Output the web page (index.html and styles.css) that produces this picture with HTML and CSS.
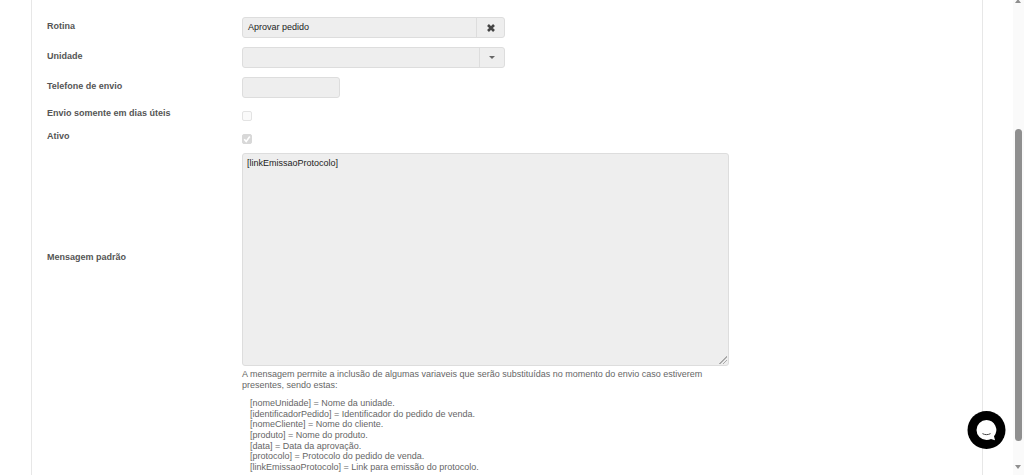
FILE: index.html
```html
<!DOCTYPE html>
<html lang="pt-BR">

<head>
    <meta charset="UTF-8">
    <meta name="viewport" content="width=device-width, initial-scale=1.0">
    <title>Mensagem automática</title>
    <link rel="stylesheet" href="styles.css">
</head>

<body>
    <div class="page">
        <main class="panel">
            <form class="form">
                <div class="form-row row-input">
                    <label class="form-label">Rotina</label>
                    <div class="combo">
                        <div class="combo-value">Aprovar pedido</div>
                        <div class="combo-btn">
                            <svg class="icon-x" viewBox="0 0 10 10" width="10" height="10">
                                <path d="M2 2 8 8M8 2 2 8" stroke="#444" stroke-width="2.6" fill="none" />
                            </svg>
                        </div>
                    </div>
                </div>

                <div class="form-row row-input">
                    <label class="form-label">Unidade</label>
                    <div class="combo">
                        <div class="combo-value"></div>
                        <div class="combo-btn combo-btn-narrow"><span class="caret"></span></div>
                    </div>
                </div>

                <div class="form-row row-input">
                    <label class="form-label" for="telefone">Telefone de envio</label>
                    <input type="text" id="telefone" class="field field-phone" disabled>
                </div>

                <div class="form-row row-check">
                    <label class="form-label">Envio somente em dias úteis</label>
                    <span class="check"></span>
                </div>

                <div class="form-row row-check row-check-last">
                    <label class="form-label">Ativo</label>
                    <span class="check checked">
                        <svg viewBox="0 0 10 10" width="10" height="10">
                            <path d="M2.2 5.200 4.200 7.400 7.800 2.600" stroke="#fff" stroke-width="1.600" fill="none" />
                        </svg>
                    </span>
                </div>

                <div class="form-row row-message">
                    <label class="form-label label-message" for="mensagem">Mensagem padrão</label>
                    <div class="message-col">
                        <textarea id="mensagem" class="field message" disabled>[linkEmissaoProtocolo]</textarea>
                        <p class="help">A mensagem permite a inclusão de algumas variaveis que serão substituídas no momento do envio caso estiverem presentes, sendo estas:</p>
                        <ul class="vars">
                            <li>[nomeUnidade] = Nome da unidade.</li>
                            <li>[identificadorPedido] = Identificador do pedido de venda.</li>
                            <li>[nomeCliente] = Nome do cliente.</li>
                            <li>[produto] = Nome do produto.</li>
                            <li>[data] = Data da aprovação.</li>
                            <li>[protocolo] = Protocolo do pedido de venda.</li>
                            <li>[linkEmissaoProtocolo] = Link para emissão do protocolo.</li>
                        </ul>
                    </div>
                </div>
            </form>
        </main>

        <div class="scrollbar">
            <span class="scroll-arrow scroll-up"></span>
            <div class="scroll-thumb"></div>
            <span class="scroll-arrow scroll-down"></span>
        </div>
    </div>

    <!-- chat widget -->
    <svg class="chat" viewBox="0 0 40 40" width="40" height="40">
        <circle cx="19.500" cy="20" r="19" fill="#000" />
        <path d="M19.500 10a10 10 0 1 0 0 20c1.600 0 3.200-.4 4.500-1.100l4 1.300-1-3.900a10 10 0 0 0-7.500-16.300z" fill="#fff" />
        <path d="M15.800 23.800c2.400 1.200 5 1.200 7.400 0" stroke="#444" stroke-width="1" fill="none" stroke-linecap="round" />
    </svg>
</body>

</html>
```

FILE: styles.css
```css
html,
body {
    margin: 0;
    padding: 0;
    height: 475px;
    overflow: hidden;
    background-color: white;
    font-family: "Liberation Sans", Arial, sans-serif;
    font-size: 9px;
    color: #555;
}

.page {
    display: flex;
    height: 475px;
}

.panel {
    width: 950px;
    margin-left: 31px;
    margin-right: 31px;
    border-left: 1px solid #e7e7e7;
    border-right: 1px solid #e7e7e7;
    overflow: hidden;
}

.form {
    padding: 17px 0 0 15px;
}

.form-row {
    display: flex;
}

.form-label {
    display: block;
    width: 195px;
    flex-shrink: 0;
    font-weight: bold;
    line-height: 12px;
    color: #555;
}

.row-input {
    height: 21px;
    margin-bottom: 9px;
}

.row-input .form-label {
    padding-top: 3px;
}

.row-check {
    height: 11px;
    margin-bottom: 12px;
}

.row-input:nth-child(3) {
    margin-bottom: 13px;
}

.row-check .form-label {
    margin-top: -4px;
}

.row-check-last {
    margin-bottom: 8px;
}

.combo {
    display: flex;
    width: 263px;
    height: 21px;
    box-sizing: border-box;
    border: 1px solid #ddd;
    border-radius: 3px;
    background-color: #eee;
}

.combo-value {
    flex: 1;
    padding-left: 5px;
    line-height: 19px;
    color: #222;
}

.combo-btn {
    display: flex;
    align-items: center;
    justify-content: center;
    width: 27px;
    border-left: 1px solid #ddd;
}

.combo-btn-narrow {
    width: 24px;
}

.caret {
    border-top: 3px solid #666;
    border-left: 3px solid transparent;
    border-right: 3px solid transparent;
}

.field {
    box-sizing: border-box;
    border: 1px solid #ddd;
    border-radius: 3px;
    background-color: #eee;
    font-family: "Liberation Sans", Arial, sans-serif;
    font-size: 9px;
    color: #222;
    margin: 0;
}

.field-phone {
    width: 98px;
    height: 21px;
}

.check {
    display: block;
    width: 10px;
    height: 10px;
    box-sizing: border-box;
    border: 1px solid #e3e3e3;
    border-radius: 2px;
    background-color: #fafafa;
}

.check svg {
    display: block;
    margin: -1px;
}

.check.checked {
    background-color: #d8d8d8;
    border-color: #d8d8d8;
}

.row-message {
    align-items: flex-start;
}

.label-message {
    margin-top: 98px;
}

.message-col {
    width: 487px;
}

.message {
    display: block;
    width: 487px;
    height: 213px;
    padding: 4px 4px;
    line-height: 11px;
    opacity: 1;
    -webkit-text-fill-color: #222;
}

.message::-webkit-resizer {
    background: linear-gradient(135deg, transparent 50%, #aaa 50%, #aaa 58%, transparent 58%, transparent 72%, #aaa 72%, #aaa 80%, transparent 80%) no-repeat right 1px bottom 1px / 8px 8px;
}

.help {
    margin: 3px 0 0 0;
    line-height: 11px;
    color: #666;
}

.vars {
    list-style: none;
    margin: 7px 0 0 0;
    padding: 0 0 0 8px;
    line-height: 10.65px;
    color: #666;
}

.scrollbar {
    position: fixed;
    top: 0;
    right: 0;
    bottom: 0;
    width: 11px;
    background-color: #fafafa;
}

.scroll-thumb {
    position: absolute;
    top: 129px;
    left: 2px;
    width: 7px;
    height: 312px;
    border-radius: 4px;
    background-color: #8f8f8f;
}

.scroll-arrow {
    position: absolute;
    left: 2px;
    border-left: 3.5px solid transparent;
    border-right: 3.5px solid transparent;
}

.scroll-up {
    top: -1px;
    border-bottom: 4px solid #8f8f8f;
}

.scroll-down {
    top: 465px;
    border-top: 4px solid #8f8f8f;
}

.chat {
    position: fixed;
    left: 967px;
    top: 410px;
}
```
